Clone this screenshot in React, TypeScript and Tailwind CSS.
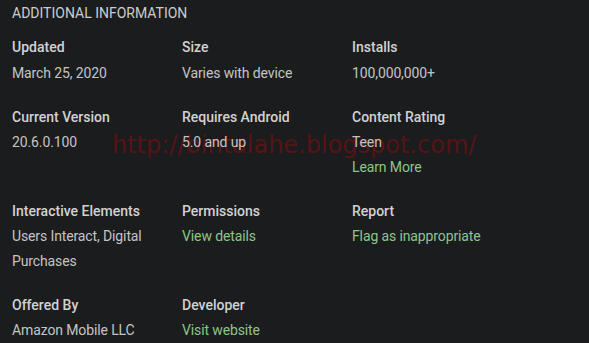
import React from "react";

type Item = {
  label: string;
  lines: string[];
  links?: string[];
};

const rows: Item[][] = [
  [
    { label: "Updated", lines: ["March 25, 2020"] },
    { label: "Size", lines: ["Varies with device"] },
    { label: "Installs", lines: ["100,000,000+"] },
  ],
  [
    { label: "Current Version", lines: ["20.6.0.100"] },
    { label: "Requires Android", lines: ["5.0 and up"] },
    { label: "Content Rating", lines: ["Teen"], links: ["Learn More"] },
  ],
  [
    { label: "Interactive Elements", lines: ["Users Interact, Digital", "Purchases"] },
    { label: "Permissions", lines: [], links: ["View details"] },
    { label: "Report", lines: [], links: ["Flag as inappropriate"] },
  ],
  [
    { label: "Offered By", lines: ["Amazon Mobile LLC"] },
    { label: "Developer", lines: [], links: ["Visit website"] },
  ],
];

function Cell({ item }: { item: Item }) {
  return (
    <div className="flex flex-col">
      <div className="text-[14px] leading-6 font-medium text-[#d2d2d2] mb-[1.5px]">{item.label}</div>
      {item.lines.map((l) => (
        <div key={l} className="text-[14px] leading-[24.5px] tracking-[-0.12px] text-[#c4c4c4]">
          {l}
        </div>
      ))}
      {item.links?.map((l) => (
        <a key={l} className="text-[14px] leading-[24.5px] tracking-[-0.12px] text-[#8cc68a] cursor-pointer">
          {l}
        </a>
      ))}
    </div>
  );
}

export default function App() {
  return (
    <div
      className="relative w-[589px] h-[343px] overflow-hidden bg-[#1b1c1e] pl-3 pt-[1px]"
      style={{ fontFamily: "Roboto, 'Liberation Sans', sans-serif" }}
    >
      <div
        className="absolute left-[112px] top-[131px] text-[24px] leading-[28px] text-[#571417] pointer-events-none whitespace-nowrap"
        style={{ fontFamily: "'DejaVu Sans', sans-serif" }}
      >
        http://bintalahe.blogspot.com/
      </div>
      <div className="relative">
        <div className="text-[14px] leading-6 uppercase text-[#cdcdcd] mb-[10px]">Additional Information</div>
        <div className="flex flex-col gap-[19.5px]">
          {rows.map((row, i) => (
            <div key={i} className="grid grid-cols-[170px_170px_170px]">
              {row.map((item) => (
                <Cell key={item.label} item={item} />
              ))}
            </div>
          ))}
        </div>
      </div>
    </div>
  );
}
